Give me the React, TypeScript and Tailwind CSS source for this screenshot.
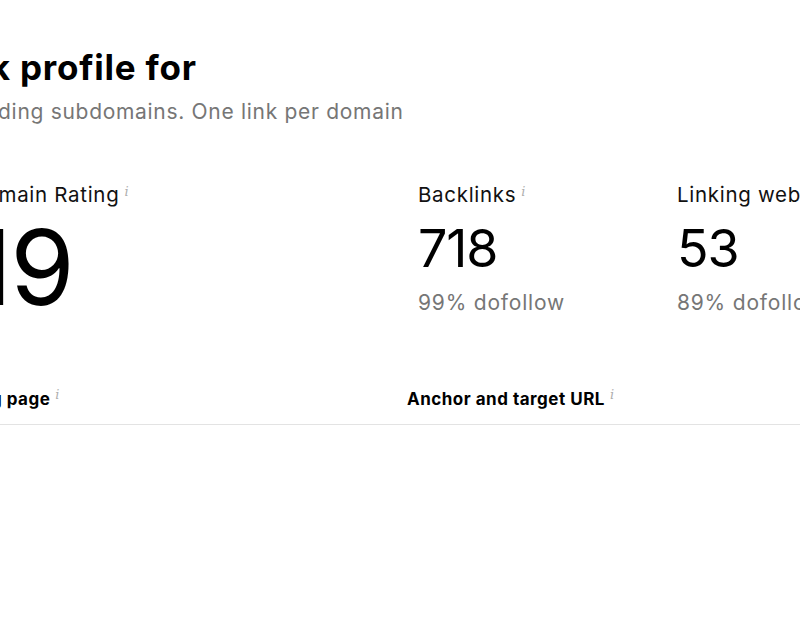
import React from "react";

const Info = () => (
    <sup className="ml-[5px] text-[13px] font-normal italic tracking-normal text-[#aeaeae] [font-family:'DejaVu_Serif',serif]">i</sup>
);

interface Stat {
    label: string;
    value: string;
    sub?: string;
    big?: boolean;
    info?: boolean;
}

const stats: Stat[] = [
    { label: "Domain Rating", value: "19", big: true, info: true },
    { label: "Backlinks", value: "718", sub: "99% dofollow", info: true },
    { label: "Linking websites", value: "53", sub: "89% dofollow" },
];

export default function App() {
    return (
        <div className="w-[800px] h-[633px] overflow-hidden bg-white text-black [font-family:Inter,'Noto_Sans',sans-serif]">
            {/* heading */}
            <div className="pt-[45px] whitespace-nowrap">
                <h1 className="-ml-[141px] text-[35px] leading-[44px] font-bold tracking-[0.8px]">Backlink profile for</h1>
                <p className="-ml-[53px] mt-[9px] text-[21px] leading-[28px] tracking-[0.7px] text-[#767676]">
                    Including subdomains. One link per domain
                </p>
            </div>

            {/* stats */}
            <div className="mt-[55px] -ml-[30px] grid grid-cols-[448px_259px_300px] whitespace-nowrap">
                {stats.map(s => (
                    <div key={s.label} className="flex flex-col">
                        <div className="text-[20.5px] leading-[28px] tracking-[0.7px] text-[#111]">
                            {s.label}
                            {s.info && <Info />}
                        </div>
                        {s.big ? (
                            <div className="mt-[6px] text-[104px] leading-[104px] tracking-[-2px]">{s.value}</div>
                        ) : (
                            <>
                                <div className="mt-[14px] text-[52px] leading-[52px] tracking-[-1.2px]">{s.value}</div>
                                <div className="mt-[14px] text-[21px] leading-[28px] tracking-[0.8px] text-[#767676]">{s.sub}</div>
                            </>
                        )}
                    </div>
                ))}
            </div>

            {/* table head */}
            <div className="mt-[68px] -ml-[80px] grid grid-cols-[487px_1fr] border-b border-[#e3e3e3] pb-[13px] whitespace-nowrap">
                <div className="text-[17px] font-bold leading-[24px] tracking-[0.5px]">
                    Referring page
                    <Info />
                </div>
                <div className="text-[17px] font-bold leading-[24px] tracking-[0.5px]">
                    Anchor and target URL
                    <Info />
                </div>
            </div>
        </div>
    );
}
